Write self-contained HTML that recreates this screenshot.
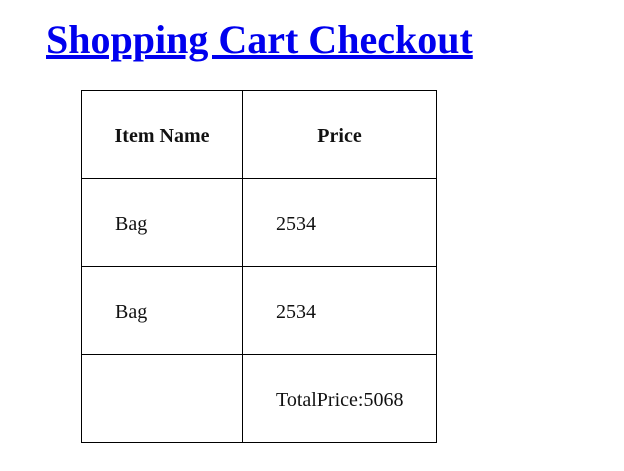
<!DOCTYPE html>
<html><head><style>
body{margin:0;width:624px;height:471px;background:#fff;font-family:"Liberation Serif",serif;position:relative;overflow:hidden}
h1{position:absolute;left:46px;top:15px;margin:0;font-size:40px;font-weight:bold;line-height:50px}
h1 a{color:#0000ee;text-decoration:underline}
table{position:absolute;left:81px;top:90px;border-collapse:collapse}
td,th{border:1px solid #000;height:84px;padding:3px 0 0 33px;font-size:20px;text-align:left;color:#111}
th{text-align:center;padding:3px 0 0 0;font-weight:bold}
.c1{width:127px}.c2{width:160px}
</style></head><body>
<h1><a>Shopping Cart Checkout</a></h1>
<table>
<tr><th class="c1" style="width:160px">Item Name</th><th style="width:193px">Price</th></tr>
<tr><td class="c1">Bag</td><td class="c2">2534</td></tr>
<tr><td class="c1">Bag</td><td class="c2">2534</td></tr>
<tr><td class="c1"></td><td class="c2">TotalPrice:5068</td></tr>
</table>
</body></html>
